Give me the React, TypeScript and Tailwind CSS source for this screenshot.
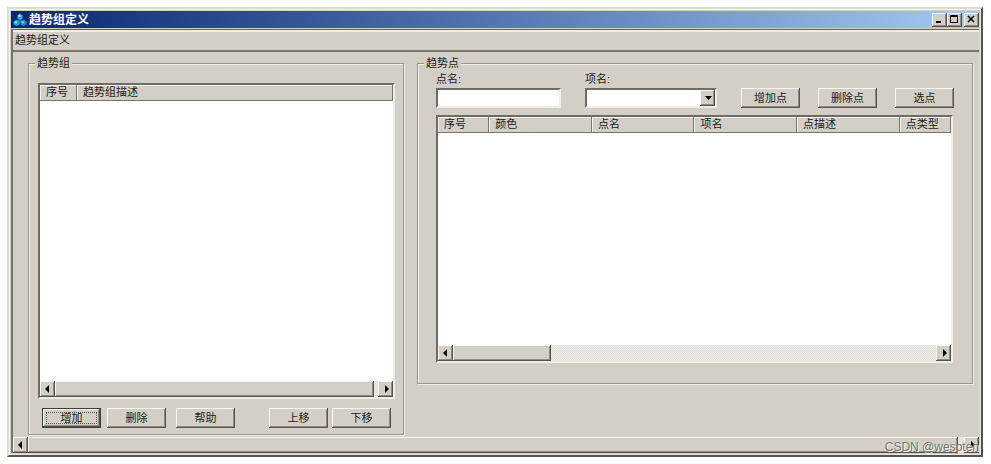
import type { ReactNode } from "react";
import { clsx } from "clsx";

const raised =
  "bg-[#d3cfc6] shadow-[inset_-1px_-1px_0_#55534e,inset_1px_1px_0_#f8f7f4,inset_-2px_-2px_0_#908d85]";
const sunken =
  "border-2 border-t-[#6e6c67] border-l-[#6e6c67] border-r-[#efede8] border-b-[#efede8] bg-white";
const dither = "bg-[repeating-conic-gradient(#dedcd8_0_25%,#f0efec_0_50%)] bg-[length:2px_2px]";

function PushButton({ children, focused = false }: { children: ReactNode; focused?: boolean }) {
  return (
    <button
      type="button"
      className={clsx(
        "relative h-5 w-[59px] shrink-0 pb-px",
        raised,
        focused && "border border-[#3c3b38]",
      )}
    >
      {children}
      {focused && <span className="absolute inset-[3px] border border-dotted border-[#55534e]" />}
    </button>
  );
}

function Arrow({ direction }: { direction: "left" | "right" | "down" }) {
  const points = {
    left: "5,0 5,8 1,4",
    right: "3,0 3,8 7,4",
    down: "1,2 8,2 4.5,6",
  };
  return (
    <svg viewBox="0 0 8 8" className="size-2" aria-hidden="true">
      <polygon points={points[direction]} fill="#000" />
    </svg>
  );
}

function ScrollBar({ thumb, label }: { thumb: string; label: string }) {
  return (
    <div role="group" aria-label={label} className={clsx("flex h-4 w-full", dither)}>
      <button
        type="button"
        aria-label="向左滚动"
        className={clsx("flex w-[15px] shrink-0 items-center justify-center", raised)}
      >
        <Arrow direction="left" />
      </button>
      <div className="min-w-0 flex-1">
        <div className={clsx("h-full", raised, thumb)} />
      </div>
      <button
        type="button"
        aria-label="向右滚动"
        className={clsx("flex w-[15px] shrink-0 items-center justify-center", raised)}
      >
        <Arrow direction="right" />
      </button>
    </div>
  );
}

type Column = { title: string; width: string };

function ListView({
  columns,
  height,
  thumb,
  label,
}: {
  columns: Column[];
  height: string;
  thumb: string;
  label: string;
}) {
  return (
    <div className={clsx("flex flex-col", sunken, height)}>
      <div className="flex-1">
        <table aria-label={label} className="w-full table-fixed border-collapse">
          <thead>
            <tr className="h-4">
              {columns.map((column) => (
                <th
                  key={column.title}
                  scope="col"
                  className={clsx(
                    "bg-[#d3cfc6] p-0 pl-1.5 text-left align-top font-normal leading-[14px] shadow-[inset_-1px_-1px_0_#77756f,inset_1px_1px_0_#f4f3ef]",
                    column.width,
                  )}
                >
                  {column.title}
                </th>
              ))}
            </tr>
          </thead>
          <tbody />
        </table>
      </div>
      <ScrollBar thumb={thumb} label={label} />
    </div>
  );
}

function GroupBox({
  title,
  className,
  children,
}: {
  title: string;
  className: string;
  children: ReactNode;
}) {
  return (
    <fieldset
      className={clsx(
        "min-w-0 border border-[#98958e] shadow-[1px_1px_0_#f0eee9,inset_1px_1px_0_#f0eee9]",
        className,
      )}
    >
      <legend className="ml-1.5 bg-[#d3cfc6] px-0.5 leading-[14px]">{title}</legend>
      {children}
    </fieldset>
  );
}

function AppIcon() {
  return (
    <svg viewBox="0 0 14 14" className="size-3.5" aria-hidden="true">
      <path d="M7 4v4L3.500 10M7 8l3.500 2" stroke="#1779b5" strokeWidth="3" fill="none" />
      <path d="M7 0.500l2.600 2v3L7 7 4.400 5.500v-3z" fill="#35a9dc" />
      <path d="M3.500 6.500l3 2v3L3.500 13 0.500 11.500v-3z" fill="#2d9fd4" />
      <path d="M10.500 6.500l3 2v3l-3 1.500-3-1.500v-3z" fill="#2488c4" />
      <circle cx="6.400" cy="2.800" r="1.200" fill="#9be4f8" />
      <circle cx="2.800" cy="9.300" r="1.200" fill="#86dcf4" />
      <circle cx="9.800" cy="9.300" r="1.200" fill="#6fcbed" />
    </svg>
  );
}

function CaptionButton({ label, children }: { label: string; children: ReactNode }) {
  return (
    <button
      type="button"
      aria-label={label}
      className={clsx("flex h-3.5 w-[15px] items-center justify-center", raised)}
    >
      <svg viewBox="0 0 9 9" className="size-[9px]" fill="none" stroke="#000" aria-hidden="true">
        {children}
      </svg>
    </button>
  );
}

const groupColumns: Column[] = [
  { title: "序号", width: "w-[37px]" },
  { title: "趋势组描述", width: "w-auto" },
];

const pointColumns: Column[] = [
  { title: "序号", width: "w-[10%]" },
  { title: "颜色", width: "w-[20%]" },
  { title: "点名", width: "w-[20%]" },
  { title: "项名", width: "w-[20%]" },
  { title: "点描述", width: "w-[20%]" },
  { title: "点类型", width: "w-[10%]" },
];

export default function App() {
  return (
    <div className="bg-white px-[7px] py-[7px] font-['Liberation_Sans','Noto_Sans_CJK_SC',sans-serif] text-[11px] leading-[14px] text-[#1c1b19]">
      <main className="relative mr-px border-2 border-t-[#dedbd5] border-l-[#dedbd5] border-r-[#55534e] border-b-[#55534e] bg-[#d3cfc6] p-0.5 shadow-[inset_1px_1px_0_#f8f7f4,inset_-1px_-1px_0_#e8e6e1]">
        <header className="flex h-[17px] items-center bg-linear-to-r from-[#0c2673] to-[#a5caf0] pl-0.5 text-white">
          <AppIcon />
          <h1 className="ml-0.5 text-xs leading-4 font-bold">趋势组定义</h1>
          <div className="ml-auto flex">
            <CaptionButton label="最小化">
              <path d="M1 7h5" strokeWidth="2" />
            </CaptionButton>
            <CaptionButton label="最大化">
              <path d="M0.500 0.500h7v7h-7zM0 1.500h8" />
            </CaptionButton>
            <span className="w-0.5" />
            <CaptionButton label="关闭">
              <path d="M1 1l6 6M7 1l-6 6" strokeWidth="1.600" />
            </CaptionButton>
          </div>
        </header>

        <div className="border-l-2 border-[#77756f]">
          <nav className="mt-px flex h-[23px] items-center border-t border-b-2 border-t-[#66645f] border-b-[#77756f] pb-px pl-0.5 shadow-[inset_0_2px_0_#efede8]">
            <button type="button">趋势组定义</button>
          </nav>

          <div className="flex items-start gap-[13px] pt-1 pr-1.5 pb-0.5 pl-[15px]">
            <GroupBox title="趋势组" className="w-[376px] shrink-0">
              <div className="pt-[13px] pr-2 pl-[9px]">
                <ListView
                  columns={groupColumns}
                  height="h-[316px]"
                  thumb="mr-1"
                  label="趋势组列表"
                />
              </div>
              <div className="mt-[9px] flex pr-3 pb-1.5 pl-[13px]">
                <PushButton focused>增加</PushButton>
                <div className="ml-1.5 flex gap-2.5">
                  <PushButton>删除</PushButton>
                  <PushButton>帮助</PushButton>
                </div>
                <div className="ml-auto flex gap-1">
                  <PushButton>上移</PushButton>
                  <PushButton>下移</PushButton>
                </div>
              </div>
            </GroupBox>

            <GroupBox title="趋势点" className="flex-1">
              <div className="flex items-end pt-0.5 pl-[18px]">
                <div className="w-[125px] shrink-0">
                  <label htmlFor="point-name" className="mb-0.5 block leading-[14px]">
                    点名:
                  </label>
                  <input
                    id="point-name"
                    type="text"
                    className={clsx("block h-5 w-full px-1 outline-none", sunken)}
                  />
                </div>
                <div className="ml-6 w-[132px] shrink-0">
                  <label htmlFor="item-name" className="mb-0.5 block leading-[14px]">
                    项名:
                  </label>
                  <div className="relative">
                    <select
                      id="item-name"
                      className={clsx("block h-5 w-full appearance-none px-1 outline-none", sunken)}
                    />
                    <span
                      className={clsx(
                        "pointer-events-none absolute inset-y-0.5 right-0.5 flex w-[15px] items-center justify-center",
                        raised,
                      )}
                    >
                      <Arrow direction="down" />
                    </span>
                  </div>
                </div>
                <div className="ml-6 flex gap-[18px]">
                  <PushButton>增加点</PushButton>
                  <PushButton>删除点</PushButton>
                  <PushButton>选点</PushButton>
                </div>
              </div>
              <div className="mt-[7px] pr-[19px] pb-5 pl-[18px]">
                <ListView
                  columns={pointColumns}
                  height="h-[248px]"
                  thumb="w-[98px]"
                  label="趋势点列表"
                />
              </div>
            </GroupBox>
          </div>

          <ScrollBar thumb="mr-1.5" label="窗口滚动条" />
        </div>

        <span className="pointer-events-none absolute right-0.5 bottom-0 text-xs leading-4 text-[#777571] [text-shadow:1px_1px_0_#f4f3ef]">
          CSDN @wespten
        </span>
      </main>
    </div>
  );
}
